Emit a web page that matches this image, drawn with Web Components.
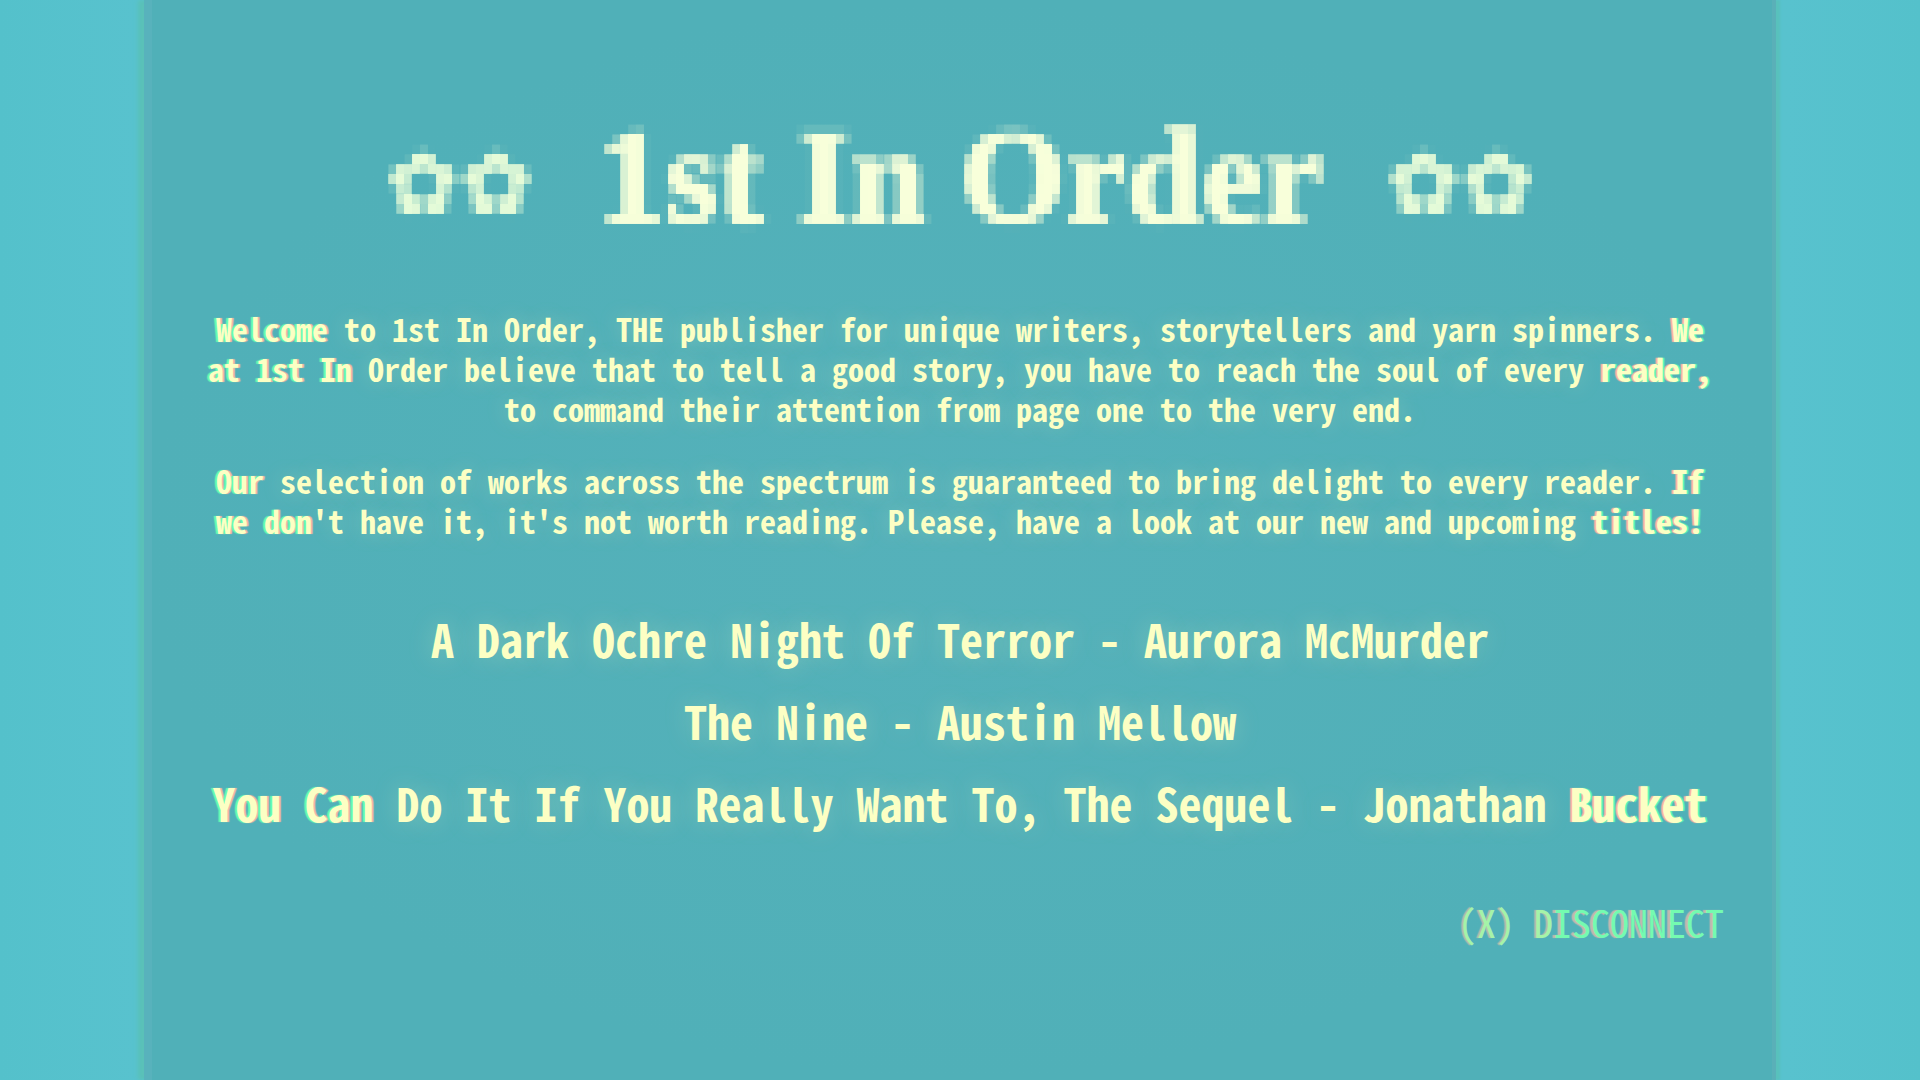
<!DOCTYPE html>
<html lang="en">
<head>
<meta charset="utf-8">
<title>1st In Order</title>
<style>
  html, body { margin: 0; min-height: 100%; }
  body { background: #56c1cc; }
</style>
</head>
<body>
<terminal-screen>
  <site-banner>1st In Order</site-banner>
  <site-intro>
    <intro-text><fringe-text side="left">Welcome</fringe-text> to 1st In Order, THE publisher for unique writers, storytellers and yarn spinners. <fringe-text side="right">We</fringe-text> <fringe-text side="left">at 1st In</fringe-text> Order believe that to tell a good story, you have to reach the soul of every <fringe-text side="right">reader,</fringe-text> to command their attention from page one to the very end.</intro-text>
    <intro-text><fringe-text side="left">Our</fringe-text> selection of works across the spectrum is guaranteed to bring delight to every reader. <fringe-text side="right">If</fringe-text> <fringe-text side="left">we don</fringe-text>'t have it, it's not worth reading. Please, have a look at our new and upcoming <fringe-text side="right">titles!</fringe-text></intro-text>
  </site-intro>
  <title-list>
    <book-title>A Dark Ochre Night Of Terror - Aurora McMurder</book-title>
    <book-title>The Nine - Austin Mellow</book-title>
    <book-title><fringe-text side="left">You Can</fringe-text> Do It If You Really Want To, The Sequel - Jonathan <fringe-text side="right">Bucket</fringe-text></book-title>
  </title-list>
  <disconnect-button></disconnect-button>
</terminal-screen>

<script>
const define = (name, html) => customElements.define(name, class extends HTMLElement {
  constructor() {
    super();
    const t = document.createElement('template');
    t.innerHTML = html;
    this.attachShadow({ mode: 'open' }).append(t.content.cloneNode(true));
  }
});

define('terminal-screen', `
  <style>
    :host {
      display: block; box-sizing: border-box; min-height: 100vh; padding: 0 7.5%;
      background: linear-gradient(90deg, #54c1cb, #58c2ce 7%, #58c2ce 93%, #54c1cb);
      color: #fcffc4;
      font-family: "Noto Sans Mono CJK JP", "Liberation Mono", monospace;
      font-weight: 700;
    }
    main {
      display: flex; flex-direction: column; box-sizing: border-box;
      min-height: 100vh; padding: 104px 52px 64px;
      background: linear-gradient(90deg, #58b2bc 0 8px, transparent 8px calc(100% - 4px), #5ab0b8 0),
        radial-gradient(closest-side, #55b1ba, #50b0b8);
      box-shadow: -6px 0 4px #5ac1b8, 4px 0 2px #58c1bc;
    }
  </style>
  <main><slot></slot></main>`);

define('site-banner', `
  <style>
    :host { display: block; }
    header {
      display: flex; justify-content: center; align-items: center; gap: 64px;
      height: 144px; color: #f8ffda; filter: url(#mosaic);
    }
    h1 { margin: 0; font: 700 136px/144px "Liberation Serif", serif; -webkit-text-stroke: 2px #f8ffda; }
    .flowers { font: 700 88px/144px "DejaVu Sans", sans-serif; padding-top: 16px; color: #e6fbd8; }
    svg { position: absolute; }
  </style>
  <svg width="0" height="0" aria-hidden="true">
    <filter id="mosaic" x="0" y="0" width="100%" height="110%" color-interpolation-filters="sRGB">
      <feGaussianBlur in="SourceGraphic" stdDeviation="2" result="soft"/>
      <feFlood x="3" y="4" width="2" height="2" flood-color="#000"/>
      <feComposite x="0" y="0" width="8" height="10" operator="over" in2="SourceGraphic" result="cell0"/>
      <feFlood x="3" y="4" width="2" height="2" flood-color="#000" result="dot"/>
      <feOffset in="dot" dx="0" dy="0" x="0" y="0" width="8" height="10" result="cell"/>
      <feTile in="cell" result="grid"/>
      <feComposite in="soft" in2="grid" operator="in"/>
      <feMorphology operator="dilate" radius="3 4"/>
      <feGaussianBlur stdDeviation="0.6"/>
    </filter>
  </svg>
  <header>
    <span class="flowers">✿✿</span>
    <h1><slot></slot></h1>
    <span class="flowers">✿✿</span>
  </header>`);

define('site-intro', `
  <style>
    :host { display: flex; flex-direction: column; align-items: center; gap: 32px; margin-top: 60px; }
  </style>
  <slot></slot>`);

define('intro-text', `
  <style>
    :host { display: block; max-width: 1512px; }
    p { margin: 0; font-size: 32px; line-height: 40px; text-align: center; text-shadow: 0 0 20px #fcffc440; }
  </style>
  <p><slot></slot></p>`);

define('fringe-text', `
  <style>
    :host { display: inline; }
    :host([side="left"]) { text-shadow: -2px 0 1px #62ffb4, 2px 0 1px #ffb4a4; }
    :host([side="right"]) { text-shadow: 2px 0 1px #62ffb4, -2px 0 1px #ffb4a4; }
  </style><slot></slot>`);

define('title-list', `
  <style>
    :host { display: flex; flex-direction: column; align-items: center; gap: 22px; margin-top: 68px; }
  </style>
  <slot></slot>`);

define('book-title', `
  <style>
    :host { display: block; }
    a {
      display: block; color: inherit; text-decoration: none; text-align: center;
      font-size: 46px; line-height: 60px; text-shadow: 0 0 24px #fcffc440;
    }
  </style>
  <a href="#"><slot></slot></a>`);

define('disconnect-button', `
  <style>
    :host { display: flex; justify-content: flex-end; margin-top: 60px; }
    button {
      border: 0; padding: 0; background: none; cursor: pointer;
      font-family: inherit; font-weight: 400; font-size: 38px; line-height: 60px;
      color: #74fbb0; text-shadow: -3px 0 1px #c4b8b0;
    }
    span { color: #a4f4a8; text-shadow: -2px 0 1px #b4bcb0; }
  </style>
  <button type="button"><span>(X) D</span>ISCONNECT</button>`);
</script>
</body>
</html>
